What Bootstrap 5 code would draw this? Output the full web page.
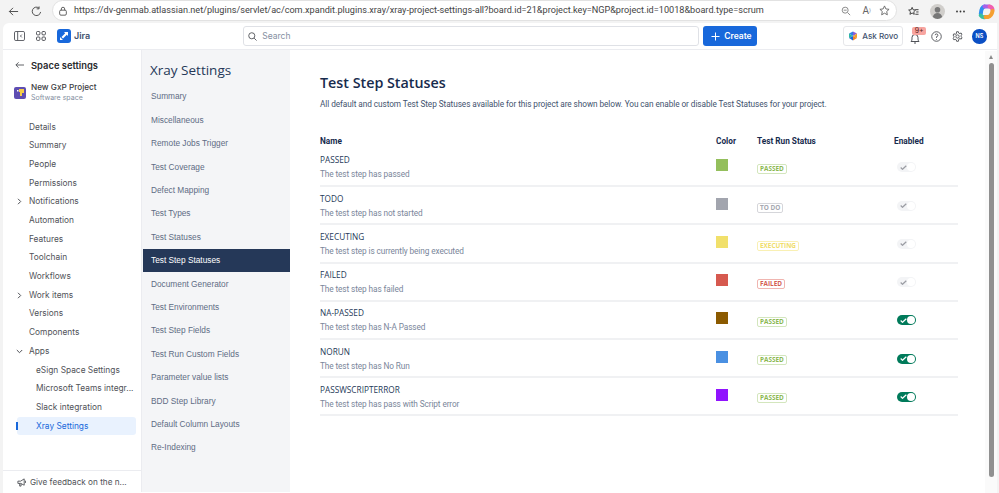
<!DOCTYPE html>
<html lang="en">
<head>
<meta charset="UTF-8">
<meta name="viewport" content="width=device-width, initial-scale=1.0">
<title>Test Step Statuses</title>
<link href="https://cdn.jsdelivr.net/npm/bootstrap@5.3.2/dist/css/bootstrap.min.css" rel="stylesheet">
<style>
html, body { height: 100%; overflow: hidden; }
body { background: #f3f3f3; font-family: "Inter", sans-serif; color: #292a2e; }
.browser-bar { height: 23px; font-family: "Roboto", sans-serif; }
.bar-icon { color: #444; flex: none; }
.url-box { flex: 1 1 auto; min-width: 0; height: 21px; margin-top: -2px; background: #fff; border: 1px solid #e2e2e2; border-radius: 11px; font-size: 9.15px; color: #444; white-space: nowrap; overflow: hidden; }
.page-wrap { height: 470px; background: #fff; border-radius: 6px 0 0 0; margin: 0 2px 0 3px; overflow: hidden; position: relative; }
.jira-top { height: 27px; border-bottom: 1px solid #ebecf0; font-size: 9px; }
.jira-mark { width: 14px; height: 14px; background: #1868db; border-radius: 3px; }
.jira-name { font-weight: 600; font-size: 9px; color: #42526e; }
.search-box { width: 456px; height: 20px; border: 1px solid #dfe1e6; border-radius: 3px; font-size: 8.5px; color: #8590a2; }
.create-btn { width: 54px; height: 20px; padding-left: 8px; background: #1868db; color: #fff; border-radius: 3px; font-size: 8.5px; font-weight: 600; }
.rovo-btn { width: 60px; height: 20px; border: 1px solid #e6e7ea; border-radius: 3px; font-size: 8.1px; font-weight: 500; color: #42526e; }
.bell-holder { position: relative; width: 14px; height: 14px; }
.bell-count { position: absolute; top: -2.5px; left: 3px; width: 14px; height: 8px; line-height: 8px; background: #f8a5a0; border-radius: 2px; font-size: 7px; text-align: center; color: #5d1f1a; }
.user-dot { width: 14.5px; height: 14.5px; margin-top: 1px; background: #0b4fc4; color: #fff; border-radius: 50%; font-size: 5.5px; font-weight: 600; }
.page-body { height: 442px; }
.space-side { width: 139px; flex: none; border-right: 1px solid #ebecf0; position: relative; }
.space-head { padding: 9px 0 0 12px; font-size: 9.4px; font-weight: 600; height: 30px; }
.project-row { padding: 1.5px 0 0 11px; height: 37.5px; }
.project-icon { width: 12px; height: 12px; background: #5e4db2; border-radius: 2px; margin-top: 5px; }
.project-name { font-size: 8.2px; font-weight: 500; line-height: 11px; color: #3b3d42; }
.project-kind { font-size: 7px; line-height: 10px; color: #8590a2; }
.space-link { display: flex; align-items: center; height: 18.7px; font-size: 8.35px; color: #505258; padding-left: 26px; position: relative; white-space: nowrap; text-decoration: none; }
.space-link.child { padding-left: 33px; }
.space-link.current { margin-left: 14px; width: 119px; padding-left: 19px; background: #e9f2fe; color: #1868db; border-radius: 3px; }
.current-tick { position: absolute; left: -1px; top: 5px; width: 1.5px; height: 8px; background: #1868db; }
.twisty { position: absolute; left: 14px; top: 6px; }
.feedback { position: absolute; left: 0; right: 0; bottom: 0; height: 22px; border-top: 1px solid #ebecf0; padding: 5px 0 0 14px; font-size: 8.2px; color: #505258; white-space: nowrap; }
.xray-side { width: 148px; flex: none; background: #f4f5f7; font-family: "Liberation Sans", sans-serif; }
.xray-title { font-family: "Open Sans", sans-serif; font-size: 13.5px; font-weight: 500; color: #253858; padding: 12px 0 0 8px; height: 35px; margin: 0; }
.xray-link { display: flex; align-items: center; height: 23.4px; padding-left: 9px; font-size: 8.3px; color: #5e6c84; text-decoration: none; }
.xray-link.active { background: #253858; color: #fff; margin-left: 1px; padding-left: 8px; }
.main-area { flex: 1 1 auto; min-width: 0; padding: 23px 38px 0 30px; font-family: "Open Sans", sans-serif; background: #fff; }
.main-title { font-size: 14.3px; font-weight: 600; color: #172b4d; margin: 0; line-height: 20px; }
.main-sub { font-family: "Roboto", sans-serif; font-size: 8.25px; letter-spacing: -.07px; color: #42526e; margin: 5px 0 0; line-height: 12px; white-space: nowrap; }
.status-table { margin: 25px 0 0; table-layout: fixed; width: 638px; }
.status-table th { font-family: "Roboto", sans-serif; font-size: 8.25px; font-weight: 700; color: #172b4d; padding: 0 0 1px; border: 0; line-height: 12px; }
.status-table td { padding: 1px 0 0; height: 38.2px; vertical-align: middle; border-bottom: 2px solid #f0f1f3; }
.step-name { font-size: 8.25px; color: #253858; line-height: 12px; }
.step-desc { font-family: "Roboto", sans-serif; font-size: 8.25px; letter-spacing: -.1px; color: #7a869a; line-height: 12px; margin-top: 2px; }
.swatch { display: block; width: 12px; height: 12px; margin-top: -4px; }
.run-tag { display: inline-block; border: 1px solid; border-radius: 2px; padding: 0 2px; font-size: 6.4px; font-weight: 700; line-height: 8px; vertical-align: middle; }
.tag-pass { color: #8bb850; border-color: #d3e6bd; }
.tag-todo { color: #a5a8b0; border-color: #d5d6da; }
.tag-exec { color: #f0dd6a; border-color: #f9f0b4; }
.tag-fail { color: #d45d52; border-color: #f0b5b0; }
.toggle-pill { display: block; width: 19px; height: 10px; border-radius: 5px; background: #f3f4f6; position: relative; margin: 0 0 0 3px; }
.toggle-pill::after { content: ""; position: absolute; right: 1px; top: 1px; width: 8px; height: 8px; border-radius: 50%; background: #fff; }
.toggle-pill svg { position: absolute; left: 3px; top: 2.5px; color: #9a9ca3; }
.toggle-pill.on { background: #007a5a; }
.toggle-pill.on svg { color: #fff; }
.scroll-track { position: absolute; top: 28px; right: 0; bottom: 0; width: 12px; background: #fafafa; }
.scroll-arrow { position: absolute; top: 4px; left: 4px; width: 0; height: 0; border: 2.5px solid transparent; border-top: 0; border-bottom: 4px solid #8a8a8a; }
.scroll-thumb { position: absolute; top: 12px; left: 4px; width: 5px; height: 414px; background: #909090; border-radius: 2.5px; }
</style>
</head>
<body>

<!-- browser toolbar -->
<div class="browser-bar d-flex align-items-center">
    <svg class="bar-icon ms-2" width="11" height="11" viewBox="0 0 12 12" fill="none" stroke="currentColor"><path d="M11 6H1.5M5.5 2 1.5 6l4 4"/></svg>
    <svg class="bar-icon" style="margin-left:12px" width="11" height="11" viewBox="0 0 12 12" fill="none" stroke="currentColor"><path d="M10.5 6.5A4.6 4.6 0 1 1 8.5 2M8.8 .5v2.6H6.2"/></svg>
    <div class="url-box d-flex align-items-center" style="margin-left:10px;margin-right:11px">
        <svg class="bar-icon" style="margin:0 6px 0 5px" width="10" height="10" viewBox="0 0 12 12" fill="none" stroke="currentColor"><rect x="2" y="5" width="8" height="6" rx="1.5"/><path d="M4 5V3.5a2 2 0 0 1 4 0V5"/></svg>
        <span class="flex-grow-1">https://dv-genmab.atlassian.net/plugins/servlet/ac/com.xpandit.plugins.xray/xray-project-settings-all?board.id=21&amp;project.key=NGP&amp;project.id=10018&amp;board.type=scrum</span>
        <svg class="bar-icon" width="10" height="10" viewBox="0 0 12 12" fill="none" stroke="#777"><circle cx="5" cy="5" r="3.6"/><path d="M3.2 5h3.6M8 8l3 3"/></svg>
        <span style="margin:0 8px 0 11px;font-size:10px;color:#666">A<sup style="font-size:5px">⟩</sup></span>
        <svg class="bar-icon" style="margin-right:6px" width="11" height="11" viewBox="0 0 12 12" fill="none" stroke="#666"><path d="m6 1 1.5 3.3 3.5.4-2.6 2.4.7 3.6L6 8.9l-3.1 1.8.7-3.6L1 4.7l3.5-.4z"/></svg>
    </div>
    <svg class="bar-icon" width="11" height="11" viewBox="0 0 12 12" fill="none" stroke="#333"><path d="m4.5 1.5 1.1 2.6 2.7.3-2 1.9.5 2.8-2.3-1.4-2.4 1.4.6-2.8-2-1.9 2.7-.3zM8 4h3.5M9 6.5h2.500M8 9h3.500"/></svg>
    <svg style="margin-left:11px;flex:none" width="15" height="15" viewBox="0 0 15 15"><circle cx="7.500" cy="7.500" r="7.500" fill="#d0cecb"/><circle cx="7.500" cy="5.800" r="2.800" fill="#777"/><path d="M2.800 13c.6-2.800 2.500-4 4.700-4s4.100 1.200 4.700 4a7.500 7.500 0 0 1-9.400 0z" fill="#777"/></svg>
    <svg style="margin-left:11px;flex:none" width="9" height="3" viewBox="0 0 9 3" fill="#333"><circle cx="1" cy="1.500" r=".9"/><circle cx="4.500" cy="1.500" r=".9"/><circle cx="8" cy="1.500" r=".9"/></svg>
    <svg style="margin-left:13px;margin-right:4px;flex:none" width="17" height="17" viewBox="0 0 17 17" fill="none" stroke-width="4" stroke-linecap="round"><path d="M6.500 3.500C4 4 3 8 2.800 11" stroke="#2f8ff0"/><path d="M2.800 12.500c1 1.500 2.500 2 4.500 1.500" stroke="#38c0a0"/><path d="M6.500 3.500h4.500" stroke="#a860e8"/><path d="M11.500 3.500c2 .5 3 1.500 3 3.500" stroke="#f060b0"/><path d="M14.500 8c-.5 3-2 5.500-4.500 6H7.500" stroke="#f5a030"/></svg>
</div>

<div class="page-wrap">
    <!-- jira top nav -->
    <div class="jira-top d-flex align-items-center">
        <svg style="margin-left:11px" width="11" height="10" viewBox="0 0 12 11" fill="none" stroke="#505258"><rect x=".5" y=".5" width="11" height="10" rx="1.500"/><path d="M4 .5v10M8.500 4 7 5.500 8.500 7"/></svg>
        <svg style="margin-left:11px" width="10" height="10" viewBox="0 0 10 10" fill="none" stroke="#505258"><rect x=".5" y=".5" width="3.400" height="3.400" rx="1"/><rect x="6" y=".5" width="3.400" height="3.400" rx="1"/><rect x=".5" y="6" width="3.400" height="3.400" rx="1"/><rect x="6" y="6" width="3.400" height="3.400" rx="1"/></svg>
        <span class="jira-mark d-flex align-items-center justify-content-center" style="margin-left:11px"><svg width="10" height="10" viewBox="0 0 10 10" fill="#fff"><path d="M5 1h4v4L7.800 3.800 4 7.500 2.500 6 6.200 2.200zM1 6l3 3H1z"/></svg></span>
        <span class="jira-name" style="margin-left:3px">Jira</span>
        <div class="search-box d-flex align-items-center" style="margin-left:153px">
            <svg class="ms-1" style="margin-right:5px" width="9" height="9" viewBox="0 0 10 10" fill="none" stroke="#505258"><circle cx="4.200" cy="4.200" r="3.400"/><path d="m6.800 6.800 2.700 2.700"/></svg>
            <span>Search</span>
        </div>
        <div class="create-btn d-flex align-items-center gap-1" style="margin-left:4px">
            <svg width="9" height="9" viewBox="0 0 9 9" stroke="#fff"><path d="M4.500 .5v8M.5 4.500h8"/></svg><span>Create</span>
        </div>
        <div class="rovo-btn d-flex align-items-center justify-content-center gap-1" style="margin-left:86px">
            <svg width="10" height="10" viewBox="0 0 10 10"><path d="M5 .5 9 2.500 5 5z" fill="#8a5cd8"/><path d="M9 2.500V7L5 5z" fill="#f0a030"/><path d="M9 7 5 9.500V5z" fill="#f0802c"/><path d="M1 2.500 5 .5V5z" fill="#2f7fe8"/><path d="M1 7V2.500L5 5z" fill="#2fb8a0"/><path d="M5 9.500 1 7l4-2z" fill="#1868db"/></svg><span>Ask Rovo</span>
        </div>
        <div class="bell-holder" style="margin-left:6px">
            <svg class="position-absolute" style="top:3px;left:0" width="12" height="12" viewBox="0 0 12 12" fill="none" stroke="#505258"><path d="M2 9.500c1-1 1-2 1-4a3 3 0 0 1 6 0c0 2 0 3 1 4zM5 11h2"/></svg>
            <span class="bell-count">9+</span>
        </div>
        <svg style="margin-left:8px" width="11" height="11" viewBox="0 0 12 12" fill="none" stroke="#505258"><circle cx="6" cy="6" r="5.200"/><path d="M4.500 4.500A1.500 1.500 0 1 1 6 6.200V7.500M6 8.800v.8"/></svg>
        <svg style="margin-left:10px" width="11" height="11" viewBox="0 0 12 12" fill="none" stroke="#505258"><circle cx="6" cy="6" r="1.800"/><path d="M5 .8h2l.3 1.500 1.300.6 1.300-.8 1 1.700-1.100 1 .1 1.400 1.100 1-1 1.700-1.300-.7-1.300.7L7 11.200H5l-.3-1.500-1.300-.7-1.300.7-1-1.700 1.100-1V5.600L1.100 4.600l1-1.700 1.300.8 1.300-.6z"/></svg>
        <span class="user-dot d-flex align-items-center justify-content-center" style="margin-left:9px">NS</span>
    </div>

    <div class="page-body d-flex">
        <!-- space settings sidebar -->
        <nav class="space-side">
            <div class="space-head d-flex align-items-start">
                <svg style="margin:2px 7px 0 0" width="9" height="8" viewBox="0 0 10 8" fill="none" stroke="#505258"><path d="M10 4H1M4 1 1 4l3 3"/></svg>
                <span>Space settings</span>
            </div>
            <div class="project-row d-flex gap-1">
                <span class="project-icon d-flex align-items-center justify-content-center" style="margin-right:1px"><svg width="9" height="9" viewBox="0 0 9 9"><path d="M3 1h5v4H6v3H4V4H3z" fill="#f5cd47"/><rect x="1" y="2" width="1.500" height="1.500" fill="#fff"/></svg></span>
                <div><div class="project-name">New GxP Project</div><div class="project-kind">Software space</div></div>
            </div>
            <a class="space-link">Details</a>
            <a class="space-link">Summary</a>
            <a class="space-link">People</a>
            <a class="space-link">Permissions</a>
            <a class="space-link"><svg class="twisty" width="5" height="7" viewBox="0 0 5 7" fill="none" stroke="#505258"><path d="m1 .8 2.700 2.700L1 6.200"/></svg>Notifications</a>
            <a class="space-link">Automation</a>
            <a class="space-link">Features</a>
            <a class="space-link">Toolchain</a>
            <a class="space-link">Workflows</a>
            <a class="space-link"><svg class="twisty" width="5" height="7" viewBox="0 0 5 7" fill="none" stroke="#505258"><path d="m1 .8 2.700 2.700L1 6.200"/></svg>Work items</a>
            <a class="space-link">Versions</a>
            <a class="space-link">Components</a>
            <a class="space-link"><svg class="twisty" style="left:13px;top:7px" width="7" height="5" viewBox="0 0 7 5" fill="none" stroke="#505258"><path d="m.8 1 2.700 2.700L6.200 1"/></svg>Apps</a>
            <a class="space-link child">eSign Space Settings</a>
            <a class="space-link child">Microsoft Teams integr...</a>
            <a class="space-link child">Slack integration</a>
            <a class="space-link current"><span class="current-tick"></span>Xray Settings</a>
            <div class="feedback d-flex gap-1">
                <svg style="margin-top:2px;flex:none" width="9" height="9" viewBox="0 0 10 10" fill="none" stroke="#505258"><path d="M1 3.500h3L8 1v7L4 6H1zM3 6v3h1.500V6.200M9.500 3v2.500"/></svg>
                <span>Give feedback on the n...</span>
            </div>
        </nav>

        <!-- xray nav -->
        <nav class="xray-side">
            <h2 class="xray-title">Xray Settings</h2>
            <a class="xray-link">Summary</a>
            <a class="xray-link">Miscellaneous</a>
            <a class="xray-link">Remote Jobs Trigger</a>
            <a class="xray-link">Test Coverage</a>
            <a class="xray-link">Defect Mapping</a>
            <a class="xray-link">Test Types</a>
            <a class="xray-link">Test Statuses</a>
            <a class="xray-link active">Test Step Statuses</a>
            <a class="xray-link">Document Generator</a>
            <a class="xray-link">Test Environments</a>
            <a class="xray-link">Test Step Fields</a>
            <a class="xray-link">Test Run Custom Fields</a>
            <a class="xray-link">Parameter value lists</a>
            <a class="xray-link">BDD Step Library</a>
            <a class="xray-link">Default Column Layouts</a>
            <a class="xray-link">Re-Indexing</a>
        </nav>

        <!-- content -->
        <main class="main-area">
            <h1 class="main-title">Test Step Statuses</h1>
            <p class="main-sub">All default and custom Test Step Statuses available for this project are shown below. You can enable or disable Test Statuses for your project.</p>
            <table class="table status-table" id="stepTable">
                <colgroup><col style="width:396px"><col style="width:41px"><col style="width:137px"><col></colgroup>
                <thead><tr><th>Name</th><th>Color</th><th>Test Run Status</th><th>Enabled</th></tr></thead>
                <tbody></tbody>
            </table>
        </main>
    </div>

    <!-- scrollbar over the page -->
    <div class="scroll-track"><span class="scroll-arrow"></span><span class="scroll-thumb"></span></div>
</div>

<script src="https://cdn.jsdelivr.net/npm/bootstrap@5.3.2/dist/js/bootstrap.bundle.min.js"></script>
<script>
// Filas de la tabla
const steps = [
    ['PASSED', 'The test step has passed', '#94bf5c', 'PASSED', 'tag-pass', false],
    ['TODO', 'The test step has not started', '#a2a5ae', 'TO DO', 'tag-todo', false],
    ['EXECUTING', 'The test step is currently being executed', '#f1e06b', 'EXECUTING', 'tag-exec', false],
    ['FAILED', 'The test step has failed', '#d6594f', 'FAILED', 'tag-fail', false],
    ['NA-PASSED', 'The test step has N-A Passed', '#8b5a00', 'PASSED', 'tag-pass', true],
    ['NORUN', 'The test step has No Run', '#4a90e2', 'PASSED', 'tag-pass', true],
    ['PASSWSCRIPTERROR', 'The test step has pass with Script error', '#9013fe', 'PASSED', 'tag-pass', true]
];
document.querySelector('#stepTable tbody').innerHTML = steps.map(s => `
    <tr>
        <td><div class="step-name">${s[0]}</div><div class="step-desc">${s[1]}</div></td>
        <td><span class="swatch" style="background:${s[2]}"></span></td>
        <td><span class="run-tag ${s[4]}">${s[3]}</span></td>
        <td><span class="toggle-pill ${s[5] ? 'on' : ''}"><svg class="d-block" width="7" height="5" viewBox="0 0 7 5" fill="none" stroke="currentColor" stroke-width="1.200"><path d="m.7 2.500 1.800 1.800L6.300.7"/></svg></span></td>
    </tr>`).join('');
</script>

</body>
</html>
